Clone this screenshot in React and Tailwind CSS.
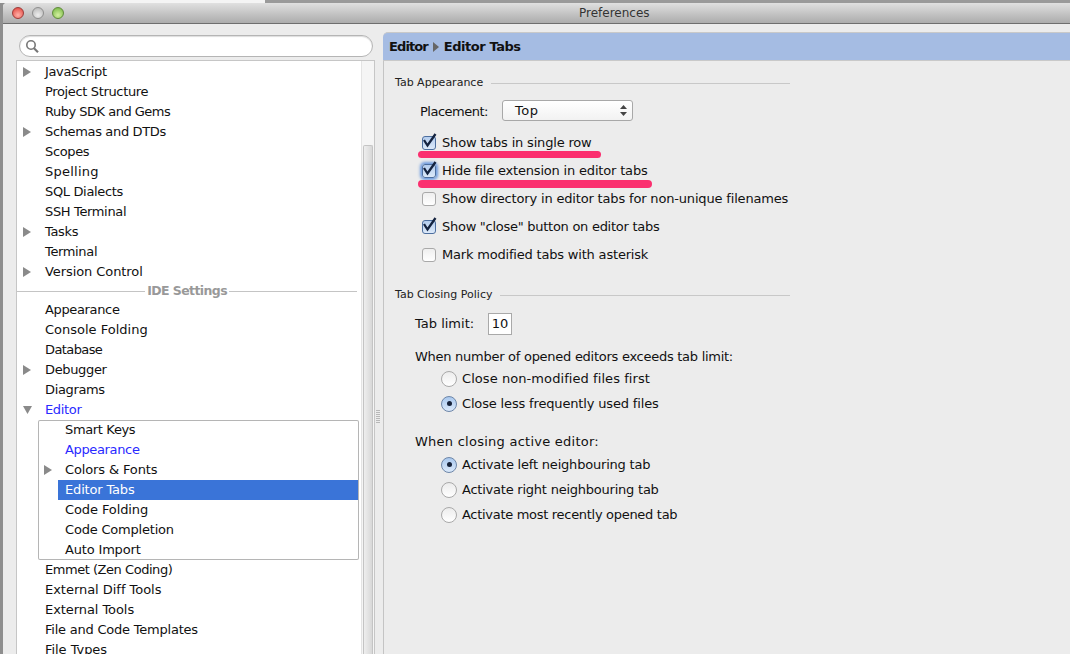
import React from "react";

function Arrow({ down }) {
  return down ? (
    <svg width="9" height="8" viewBox="0 0 9 8" className="block">
      <polygon points="0,0 9,0 4.5,8" fill="#8a8a8a" />
    </svg>
  ) : (
    <svg width="8" height="10" viewBox="0 0 8 10" className="block">
      <polygon points="0,0 8,5 0,10" fill="#8a8a8a" />
    </svg>
  );
}

function Row({ label, arrow, down, blue, t }) {
  return (
    <div className="flex h-5 items-center">
      <div className="flex w-[28px] shrink-0 justify-start pl-[6px]">{arrow && <Arrow down={down} />}</div>
      <span className={`${blue ? "text-[#2a2aff]" : "text-[#111]"} ${t || ""}`}>{label}</span>
    </div>
  );
}

function SubRow({ label, blue, t }) {
  return (
    <div className={`flex h-5 items-center pl-[27px] ${blue ? "text-[#2a2aff]" : ""}`}>
      <span className={t}>{label}</span>
    </div>
  );
}

function Check({ checked, focus }) {
  return (
    <span className={`relative flex h-[14px] w-[14px] shrink-0 items-center justify-center rounded-[3px] border ${checked ? "border-[#4d6f9f] bg-gradient-to-b from-[#b4cdee] to-[#dce9f9]" : "border-[#a9a9a9] bg-gradient-to-b from-[#efefef] to-white"} ${focus ? "shadow-[0_0_3px_2px_#6c9ade]" : ""}`}>
      {checked && (
        <svg width="16" height="16" viewBox="0 0 16 16" className="absolute -top-[4px] left-0">
          <path d="M1 7 L4.5 12.5 L12.5 1" fill="none" stroke="#14233f" strokeWidth="2.3" />
        </svg>
      )}
    </span>
  );
}

function CheckRow({ label, checked, focus, t }) {
  return (
    <div className="flex h-[28px] items-center gap-[6px] pl-[27px]">
      <Check checked={checked} focus={focus} />
      <span className={t}>{label}</span>
    </div>
  );
}

function Radio({ checked, label, t }) {
  return (
    <div className="flex h-[25px] items-center gap-[5px] pl-[46px]">
      <span className={`flex h-[16px] w-[16px] items-center justify-center rounded-full border ${checked ? "border-[#6d86a8] bg-gradient-to-b from-[#a9c8ee] to-[#dbe9fa]" : "border-[#a9a9a9] bg-gradient-to-b from-[#ececec] to-white"}`}>
        {checked && <span className="h-[5px] w-[5px] rounded-full bg-[#16223a]" />}
      </span>
      <span className={t}>{label}</span>
    </div>
  );
}

function Section({ title }) {
  return (
    <div className="flex h-4 w-[395px] items-center gap-2 text-[11px]">
      <span className="text-[#222]">{title}</span>
      <span className="h-px flex-1 bg-[#c8c8c8]" />
    </div>
  );
}

export default function App() {
  return (
    <div className="relative h-[654px] w-[1070px] overflow-hidden bg-[#8e8e8e] text-[13px] text-[#111] [font-family:'DejaVu_Sans',sans-serif]">
      <div className="h-[3px] bg-[linear-gradient(90deg,#f4f4f4_265px,#9a9a9a_265px)]" />
      <div className="ml-[3px] flex h-[651px] flex-col overflow-hidden rounded-tl-[4px] bg-[#ececec]">
        <div className="flex h-[21px] shrink-0 items-center border-b border-[#6e6e6e] bg-gradient-to-b from-[#e0e0e0] to-[#acacac]">
          <div className="ml-[9px] flex gap-2">
            <span className="h-3 w-3 rounded-full border border-[#9c3a38] bg-[radial-gradient(circle_at_50%_70%,#ffb1a9,#e03e36)]" />
            <span className="h-3 w-3 rounded-full border border-[#8e8e8e] bg-[radial-gradient(circle_at_50%_70%,#eeeeee,#b2b2b2)]" />
            <span className="h-3 w-3 rounded-full border border-[#5f8a3a] bg-[radial-gradient(circle_at_50%_70%,#d4f0a0,#6fb33c)]" />
          </div>
          <span className="ml-[515px] text-[12px] text-[#333]">Preferences</span>
        </div>
        <div className="flex min-h-0 flex-1">
          <div className="w-[372px] shrink-0 pl-[13px] pt-[11px]">
            <div className="ml-[3px] flex h-[22px] w-[354px] items-center rounded-full border border-[#b5b5b5] bg-white pl-[5px] shadow-[inset_0_1px_1px_#ddd]">
              <svg width="15" height="15" viewBox="0 0 15 15">
                <circle cx="6" cy="6" r="4.2" fill="none" stroke="#777" strokeWidth="1.6" />
                <path d="M9 9.2 L13 13.2" stroke="#777" strokeWidth="2.2" />
              </svg>
            </div>
            <div className="mt-[3px] flex h-[600px] w-[359px] border border-b-0 border-[#c6c6c6] bg-white">
              <div className="w-[344px] shrink-0 pt-px tracking-[-0.35px]">
                <Row label="JavaScript" arrow />
                <Row label="Project Structure" />
                <Row label="Ruby SDK and Gems" t="tracking-[-0.5px]" />
                <Row label="Schemas and DTDs" arrow />
                <Row label="Scopes" />
                <Row label="Spelling" t="tracking-[0.25px]" />
                <Row label="SQL Dialects" />
                <Row label="SSH Terminal" />
                <Row label="Tasks" arrow />
                <Row label="Terminal" />
                <Row label="Version Control" arrow t="tracking-[-0.08px]" />
                <div className="flex h-[18px] items-center gap-[2px] pr-[4px] text-[#999]">
                  <span className="h-px flex-1 bg-[#c4c4c4]" />
                  <span className="text-[12.5px] font-bold tracking-[-0.6px]">IDE Settings</span>
                  <span className="h-px w-[128px] bg-[#c4c4c4]" />
                </div>
                <Row label="Appearance" />
                <Row label="Console Folding" t="tracking-[0px]" />
                <Row label="Database" t="tracking-[-0.6px]" />
                <Row label="Debugger" arrow />
                <Row label="Diagrams" />
                <Row label="Editor" arrow down blue />
                <div className="ml-[21px] h-[140px] w-[321px] rounded-[2px] shadow-[inset_0_0_0_1px_#b5b5b5]">
                  <SubRow label="Smart Keys" />
                  <SubRow label="Appearance" blue />
                  <div className="flex h-5 items-center pl-[6px]">
                    <span className="w-[21px]"><Arrow /></span>
                    <span className="tracking-[-0.13px]">Colors &amp; Fonts</span>
                  </div>
                  <div className="ml-[20px] mr-px flex h-5 items-center bg-[#3a74d8] pl-[7px] tracking-[-0.17px] text-white">Editor Tabs</div>
                  <SubRow label="Code Folding" t="tracking-[-0.1px]" />
                  <SubRow label="Code Completion" t="tracking-[-0.2px]" />
                  <SubRow label="Auto Import" t="tracking-[-0.17px]" />
                </div>
                <Row label="Emmet (Zen Coding)" t="tracking-[-0.46px]" />
                <Row label="External Diff Tools" t="tracking-[-0.03px]" />
                <Row label="External Tools" t="tracking-[-0.07px]" />
                <Row label="File and Code Templates" t="tracking-[-0.22px]" />
                <Row label="File Types" t="tracking-[-0.05px]" />
              </div>
              <div className="flex-1 border-l border-[#e4e4e4] bg-[#f5f5f5] px-px pt-[84px]">
                <div className="h-full rounded-t-[2px] border border-b-0 border-[#c4c4c4] bg-gradient-to-r from-[#eeeeee] to-[#d8d8d8]" />
              </div>
            </div>
          </div>
          <div className="flex w-[11px] shrink-0 -ml-[3px] justify-center pt-[385px]">
            <span className="h-[14px] w-[4px] bg-[repeating-linear-gradient(0deg,#b8b8b8_0,#b8b8b8_1px,transparent_1px,transparent_2px)]" />
          </div>
          <div className="flex min-w-0 flex-1 flex-col pt-[8px]">
            <div className="flex h-[29px] shrink-0 items-center gap-[3px] rounded-tl-[5px] border-y border-y-[#c9c9c9] bg-[#a5bce3] pl-[6px] font-bold tracking-[-0.45px]">
              <span className="tracking-[-0.9px]">Editor</span>
              <svg width="6" height="10" viewBox="0 0 6 10" className="ml-[2px]"><polygon points="0,0 6,5 0,10" fill="#666" /></svg>
              <span className="ml-[2px]">Editor Tabs</span>
            </div>
            <div className="flex-1 border-l border-[#c4c4c4] pl-[11px] pt-[14px]">
              <Section title="Tab Appearance" />
              <div className="mt-[9px] flex h-6 items-center pl-[25px]">
                <span className="w-[82px] tracking-[-0.5px]">Placement:</span>
                <div className="flex h-[21px] w-[131px] items-center justify-between self-start rounded-[3px] border border-[#a8a8a8] bg-gradient-to-b from-white to-[#f2f2f2] pl-3 pr-[5px]">
                  <span className="tracking-[0.5px]">Top</span>
                  <svg width="7" height="11" viewBox="0 0 7 11"><polygon points="3.5,0 7,4 0,4" fill="#444" /><polygon points="0,7 7,7 3.5,11" fill="#444" /></svg>
                </div>
              </div>
              <div className="mt-[5px]">
                <CheckRow label="Show tabs in single row" checked t="tracking-[-0.18px]" />
                <CheckRow label="Hide file extension in editor tabs" checked focus t="tracking-[-0.18px]" />
                <CheckRow label="Show directory in editor tabs for non-unique filenames" t="tracking-[-0.17px]" />
                <CheckRow label='Show "close" button on editor tabs' checked t="tracking-[-0.27px]" />
                <CheckRow label="Mark modified tabs with asterisk" t="tracking-[-0.19px]" />
              </div>
              <div className="mt-[18px]"><Section title="Tab Closing Policy" /></div>
              <div className="mt-[10px] flex h-[22px] items-center pl-5">
                <span className="w-[73px]">Tab limit:</span>
                <span className="flex h-[22px] w-6 items-center justify-center border border-[#a9a9a9] bg-white">10</span>
              </div>
              <div className="mt-[12px] flex h-[19px] items-center pl-5 tracking-[-0.27px]">When number of opened editors exceeds tab limit:</div>
              <Radio label="Close non-modified files first" t="tracking-[0.07px]" />
              <Radio label="Close less frequently used files" checked t="tracking-[-0.16px]" />
              <div className="mt-[15px] flex h-[21px] items-center pl-5 tracking-[0.25px]">When closing active editor:</div>
              <Radio label="Activate left neighbouring tab" checked t="tracking-[-0.2px]" />
              <Radio label="Activate right neighbouring tab" t="tracking-[-0.23px]" />
              <Radio label="Activate most recently opened tab" t="tracking-[-0.3px]" />
            </div>
          </div>
        </div>
      </div>
      <span className="absolute left-[418px] top-[151px] h-[7px] w-[183px] rounded-full bg-[#fb2f6f]" />
      <span className="absolute left-[418px] top-[180px] h-[8px] w-[234px] rounded-full bg-[#fb2f6f]" />
    </div>
  );
}
